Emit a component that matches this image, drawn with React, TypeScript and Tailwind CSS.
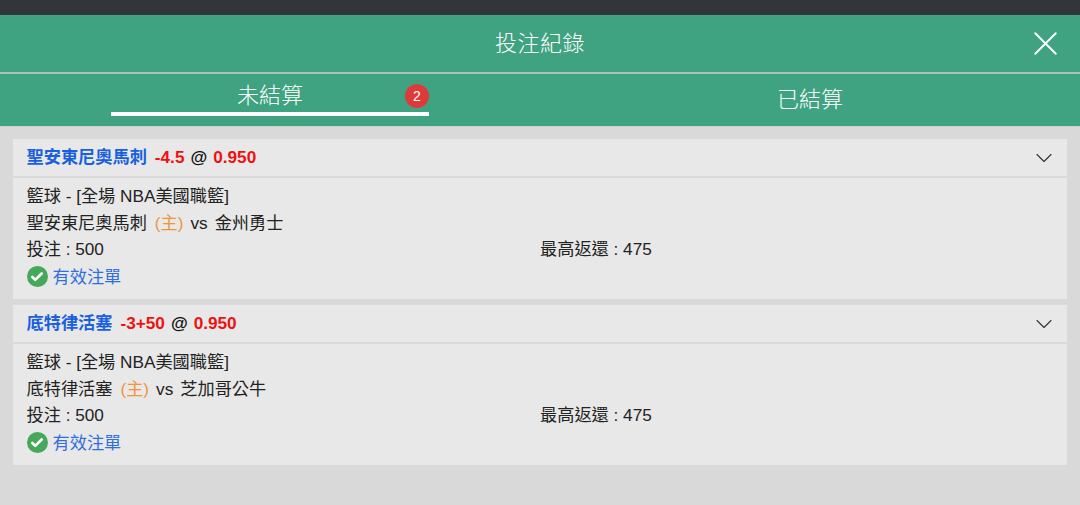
import { X, ChevronDown, Check } from 'lucide-react'

const font = { fontFamily: '"Liberation Sans", "Noto Sans CJK TC", sans-serif' }

const bets = [
	{ id: 1, team: '聖安東尼奧馬刺', line: '-4.5', away: '金州勇士' },
	{ id: 2, team: '底特律活塞', line: '-3+50', away: '芝加哥公牛' },
]

function BetCard({ bet }: { bet: (typeof bets)[0] }) {
	return (
		<div className="bg-[#e8e8e8]">
			<div className="box-content flex h-[37px] items-center justify-between border-b-2 border-[#d9d9d9] pl-[13.5px] pr-[9px]">
				<div className="flex items-center text-[17.2px] font-bold leading-none">
					<span className="text-[#1a5fe0]">{bet.team}</span>
					<span className="ml-[8px] text-[#ee1111]">{bet.line}</span>
					<span className="ml-[6px] text-[#111]">@</span>
					<span className="ml-[6px] text-[#ee1111]">0.950</span>
				</div>
				<ChevronDown className="h-[28px] w-[28px] text-[#333]" strokeWidth={0.95} />
			</div>
			<div className="h-[121px] pl-[13.5px] pt-[5px] text-[17.2px] leading-[26.5px] text-[#222]">
				<div>籃球 - [全場 NBA美國職籃]</div>
				<div>
					{bet.team}
					<span className="ml-[8px] text-[#f0953a]">(主)</span>
					<span className="ml-[7px]">vs</span>
					<span className="ml-[7px]">{bet.away}</span>
				</div>
				<div className="grid grid-cols-[513.5px_1fr]">
					<span>投注 : 500</span>
					<span>最高返還 : 475</span>
				</div>
				<div className="mt-[1px] flex items-center gap-[5px] text-[#2f6fe0]">
					<span className="flex h-[21px] w-[21px] items-center justify-center rounded-full bg-[#46a85a]">
						<Check className="h-[14px] w-[14px] text-white" strokeWidth={4.5} />
					</span>
					<span>有效注單</span>
				</div>
			</div>
		</div>
	)
}

export default function App() {
	return (
		<div className="flex h-[505px] w-[1080px] flex-col overflow-hidden bg-[#d9d9d9]" style={font}>
			<div className="h-[15px] bg-[#32363a]" />
			<div className="flex h-[57px] items-center justify-between bg-[#3fa381] pl-[495px] pr-[14px] text-white">
				<span className="text-[22px] font-light leading-none tracking-[0.5px]">投注紀錄</span>
				<X className="h-[41px] w-[41px]" strokeWidth={1.1} />
			</div>
			<div className="h-[2px] bg-[#a3c6b8]" />
			<div className="grid h-[52px] grid-cols-2 bg-[#3fa381] text-[22px] font-light leading-none text-white">
				<div className="flex justify-center">
					<div className="relative flex h-[42px] w-[318px] justify-center border-b-4 border-white pt-[11px]">
						<span>未結算</span>
						<span className="absolute right-0 top-[10px] flex h-[24px] w-[24px] items-center justify-center rounded-full bg-[#dd3b3b] text-[14px] font-normal">
							2
						</span>
					</div>
				</div>
				<div className="flex justify-center pt-[15px]">
					<span>已結算</span>
				</div>
			</div>
			<div className="flex flex-col gap-[6px] border-t border-[#cfcfcf] px-[13px] pt-[12px]">
				{bets.map((bet) => (
					<BetCard key={bet.id} bet={bet} />
				))}
			</div>
		</div>
	)
}
